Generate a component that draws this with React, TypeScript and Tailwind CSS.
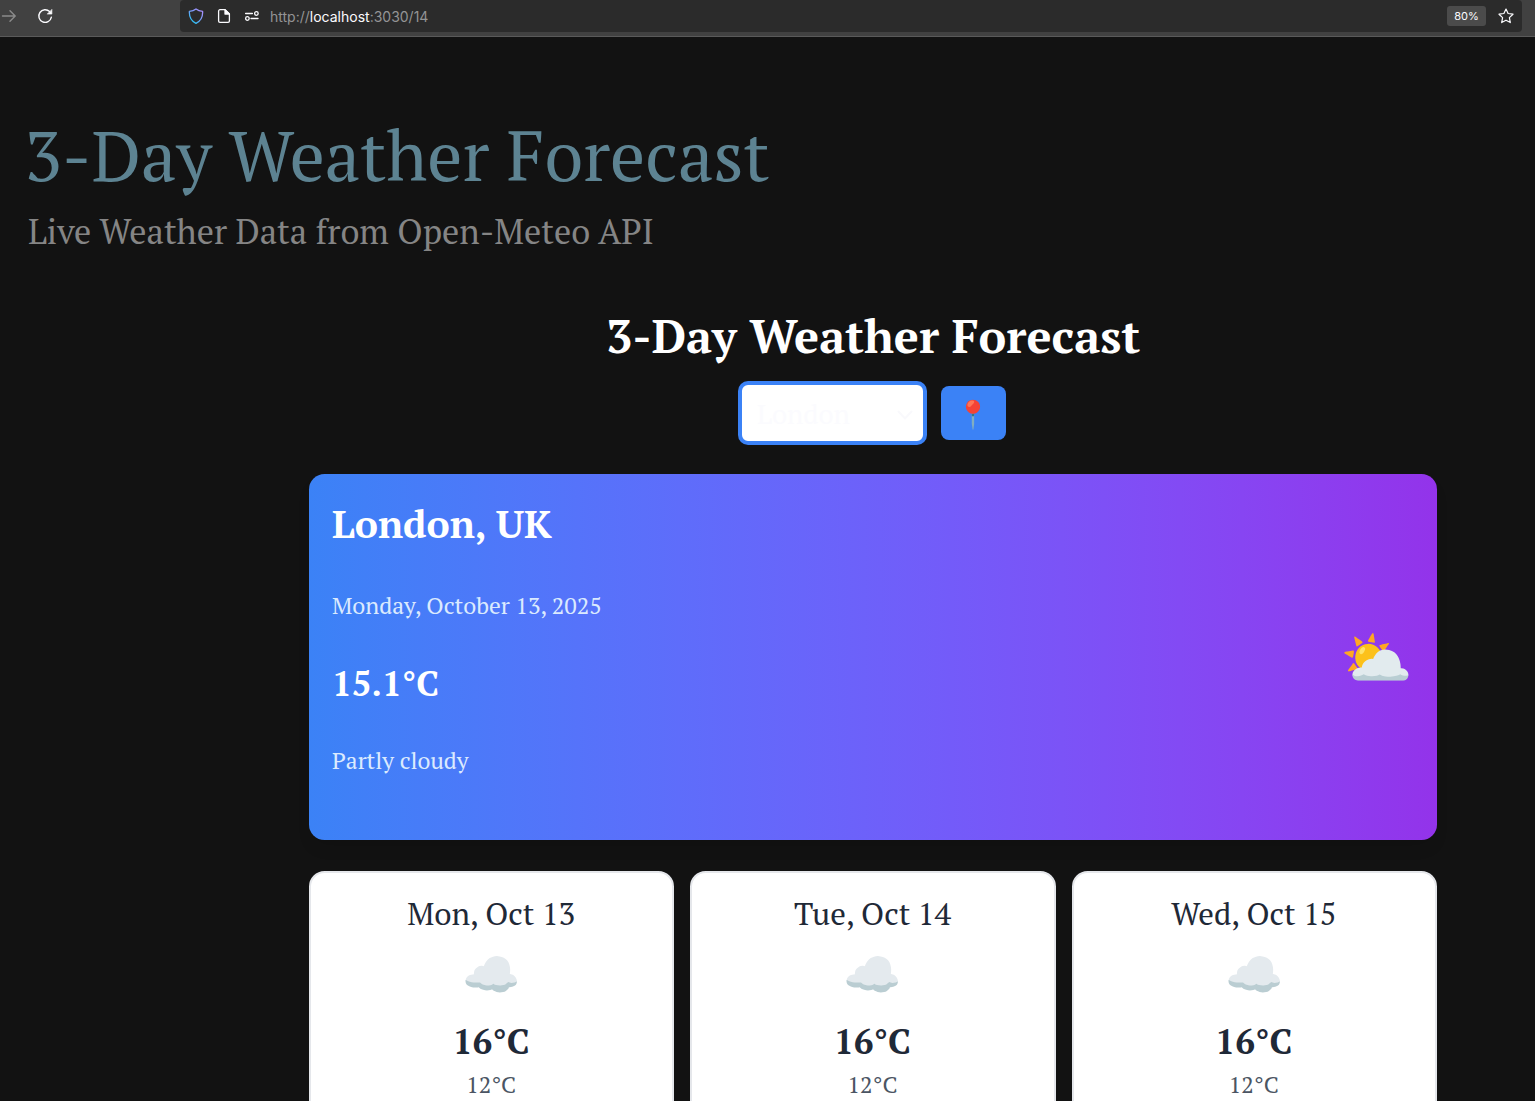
import React from "react";

const days = [
  { label: "Mon, Oct 13", high: "16°C", low: "12°C" },
  { label: "Tue, Oct 14", high: "16°C", low: "12°C" },
  { label: "Wed, Oct 15", high: "16°C", low: "12°C" },
];

function BrowserBar() {
  return (
    <div className="flex h-[37px] items-start border-b border-[#5a5a5a] bg-[#414141] font-['Inter',sans-serif]">
      <div className="flex h-8 w-[180px] items-center">
        <svg className="h-4 w-4 shrink-0" viewBox="0 0 16 16" fill="none" stroke="#8b8b8b" strokeWidth="1.4" strokeLinecap="round" strokeLinejoin="round">
          <path d="M2.5 8H15M10 2.8L15.2 8L10 13.2" />
        </svg>
        <svg className="ml-[21px] h-4 w-4" viewBox="0 0 16 16" fill="none" stroke="#fbfbfe" strokeWidth="1.4" strokeLinecap="round" strokeLinejoin="round">
          <path d="M14.3 9.3A6.3 6.3 0 1 1 12.6 3.6" />
          <path d="M14.9 1.7V6.1H10.5Z" fill="#fbfbfe" strokeWidth="0.6" />
        </svg>
      </div>
      <div className="flex h-8 w-[1342px] items-center rounded-[4px] bg-[#2b2b2b] px-2">
        <svg className="h-4 w-4" viewBox="0 0 16 16" fill="none">
          <defs>
            <linearGradient id="shield" x1="14" y1="1" x2="3" y2="14" gradientUnits="userSpaceOnUse">
              <stop stopColor="#b18cff" />
              <stop offset="0.5" stopColor="#7a9cf8" />
              <stop offset="1" stopColor="#22c7f5" />
            </linearGradient>
          </defs>
          <path d="M8 0.9C6.2 2.3 3.8 3.1 1.4 3.4C1.1 8.6 3 12.9 8 15.3C13 12.9 14.9 8.6 14.6 3.4C12.2 3.1 9.8 2.3 8 0.9Z" stroke="url(#shield)" strokeWidth="1.3" strokeLinejoin="round" />
        </svg>
        <svg className="ml-3 h-4 w-4" viewBox="0 0 16 16" fill="none" stroke="#fbfbfe" strokeWidth="1.3" strokeLinejoin="round">
          <path d="M9 1.7H4A1.4 1.4 0 0 0 2.6 3.1V12.9A1.4 1.4 0 0 0 4 14.3H12A1.4 1.4 0 0 0 13.4 12.9V6Z" />
          <path d="M9 1.7V6H13.4Z" fill="#fbfbfe" />
        </svg>
        <svg className="ml-3 h-4 w-4" viewBox="0 0 16 16" fill="none" stroke="#fbfbfe" strokeWidth="1.3" strokeLinecap="round">
          <path d="M1.6 5.5H8.4M7 10.5H14" />
          <circle cx="12.4" cy="5.5" r="1.8" />
          <circle cx="3.4" cy="10.5" r="1.8" />
        </svg>
        <span className="ml-2.5 pt-px text-[14px] leading-5 text-[#949495]">
          http://<span className="text-[#fbfbfe]">localhost</span>:3030/14
        </span>
        <span className="ml-auto flex h-5 w-[39px] items-center justify-center rounded-[3px] bg-[#4b4b4b] text-[11px] text-[#fbfbfe]">
          80%
        </span>
        <svg className="ml-3 h-4 w-4" viewBox="0 0 16 16" fill="none" stroke="#fbfbfe" strokeWidth="1.2" strokeLinejoin="round">
          <path d="M8 1.1L10.1 5.5L15 6.2L11.4 9.6L12.3 14.6L8 12.2L3.7 14.6L4.6 9.6L1 6.2L5.9 5.5Z" />
        </svg>
      </div>
    </div>
  );
}

function DayCard({ label, high, low }: { label: string; high: string; low: string }) {
  return (
    <div className="flex h-[300px] flex-1 flex-col items-center rounded-[15.6px] border-2 border-[#e5e7eb] bg-white pt-[19px] pr-px">
      <div className="text-[31.2px] leading-[44px] text-[#1f2937]">{label}</div>
      <div className="h-[85px] text-[46.9px] leading-[74px]">☁️</div>
      <div className="text-[35.1px] font-bold leading-10 text-[#1f2937]">{high}</div>
      <div className="mt-2 text-[23.4px] leading-8 text-[#4b5563]">{low}</div>
    </div>
  );
}

export default function App() {
  return (
    <div className="h-[1101px] w-full overflow-hidden bg-[#121212] font-['PT_Serif','Liberation_Serif',serif]">
      <BrowserBar />
      <header className="pl-7 pt-[78px]">
        <h1 className="-ml-[3.5px] text-[70px] leading-[80px] text-[#5d8392]">3-Day Weather Forecast</h1>
        <p className="mt-3.5 text-[34.3px] leading-[44px] text-[#858585]">Live Weather Data from Open-Meteo API</p>
      </header>
      <main className="ml-[309px] mt-[54px] flex w-[1128px] flex-col">
        <h2 className="text-center text-[46.75px] font-bold leading-[56px] text-white">3-Day Weather Forecast</h2>
        <div className="mt-5 flex h-[60px] items-center justify-center gap-4">
          <div className="flex h-[60px] w-[185px] items-center justify-between rounded-[8px] border-2 border-[#3b82f6] bg-white pl-[15px] pr-2.5 pt-0.5 text-[27.3px] text-[#fbfbfe] ring-2 ring-[#3b82f6]">
            <span>London</span>
            <svg className="mt-0.5 h-4 w-4" viewBox="0 0 16 16" fill="none" stroke="#f9f9fc" strokeWidth="2" strokeLinecap="round" strokeLinejoin="round">
              <path d="M1.5 4.5L8 11.5L14.5 4.5" />
            </svg>
          </div>
          <button className="flex h-[54px] w-[65px] items-center justify-center rounded-[8px] bg-[#3b82f6] pr-0.5 pt-0.5 text-[27.3px]">📍</button>
        </div>
        <section className="mt-[31px] flex h-[366px] items-center justify-between rounded-[15.6px] bg-linear-to-r/oklch from-[#3b82f6] to-[#9333ea] pl-[23px] pr-6 shadow-[0_10px_15px_-3px_rgba(0,0,0,0.1)]">
          <div className="h-[321px]">
            <h3 className="text-[39.05px] font-bold leading-[52px] text-white">London, UK</h3>
            <p className="mt-[41px] text-[23.45px] leading-8 text-[#dbeafe]">Monday, October 13, 2025</p>
            <p className="mt-[41px] text-[35px] font-bold leading-10 text-white">15.1°C</p>
            <p className="mt-[42px] text-[23.3px] leading-8 text-[#dbeafe]">Partly cloudy</p>
          </div>
          <div className="text-[58.6px] leading-none">⛅</div>
        </section>
        <div className="mt-[31px] flex gap-4">
          {days.map((d) => (
            <DayCard key={d.label} {...d} />
          ))}
        </div>
      </main>
    </div>
  );
}
